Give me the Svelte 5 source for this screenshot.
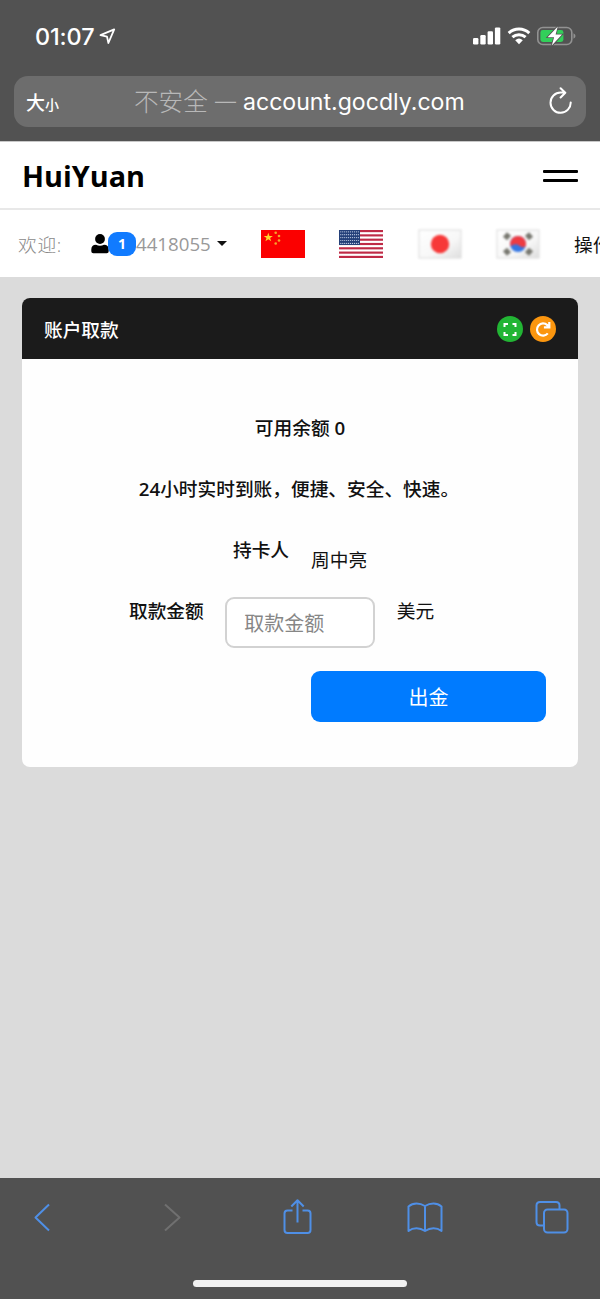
<script>
  let amount = $state('');
  let isFull = $state(false);

  const user = { account: '4418055', unread: 1, name: '周中亮', balance: 0 };

  const stars = Array.from({ length: 50 }, (_, i) => ({
    x: 1.8 + (i % 10) * 1.95,
    y: 1.8 + Math.floor(i / 10) * 2.9,
  }));

  function reset() {
    amount = '';
  }
</script>

<div class="phone">
  <div class="browser-top">
    <div class="status">
      <span class="time">01:07</span>
      <svg class="location" width="17" height="17" viewBox="0 0 17 17">
        <path d="M1.5 7.2 15.2 1.4 9.4 15 8 8.6Z" />
      </svg>
      <svg class="signal" width="28" height="18" viewBox="0 0 28 18">
        <rect x="0" y="11" width="5.4" height="6.5" rx="1.2" />
        <rect x="7.3" y="8" width="5.4" height="9.5" rx="1.2" />
        <rect x="14.6" y="4.2" width="5.4" height="13.3" rx="1.2" />
        <rect x="21.9" y="0.4" width="5.4" height="17.1" rx="1.2" />
      </svg>
      <svg class="wifi" width="24" height="18" viewBox="0 0 24 18">
        <path d="M1.7 6.2a15 15 0 0 1 20.6 0M5.4 10.2a9.8 9.8 0 0 1 13.2 0" />
        <path class="dot" d="M8.2 13.2a5.8 5.8 0 0 1 7.6 0L12 17.3Z" />
      </svg>
      <svg class="battery" width="39" height="22" viewBox="0 0 39 22">
        <rect class="shell" x="0.8" y="2.5" width="34" height="17" rx="5" />
        <path class="tip" d="M36.5 8.2q2 1 2 2.8t-2 2.8z" />
        <rect class="charge" x="3.4" y="5" width="23" height="12" rx="2.4" />
        <path class="bolt" d="M20.8 1.4 10.6 12.3h6.5l-2.3 8.3L25 9.6h-6.4Z" />
      </svg>
    </div>
    <div class="address">
      <span class="size-toggle">大<small>小</small></span>
      <div class="url"><span class="insecure">不安全</span><span class="dash">—</span><span class="domain">account.gocdly.com</span></div>
      <svg width="26" height="30" viewBox="0 0 26 30">
        <path d="M22.7 15.4a10.1 10.1 0 1 1-10-9.8h4M12.6 1.2l4.7 4.6-4.7 4.7" />
      </svg>
    </div>
  </div>

  <header>
    <h1>HuiYuan</h1>
    <button class="menu" aria-label="menu"><i></i><i></i></button>
  </header>

  <nav>
    <span class="welcome">欢迎:</span>
    <svg class="person" width="18" height="20" viewBox="0 0 18 20">
      <circle cx="9" cy="5" r="4.9" />
      <path d="M5 10.8q4 2 8 0Q17.7 11 17.7 15.5v1.7q0 2-2 2H2.3q-2 0-2-2v-1.7Q.3 11 5 10.8Z" />
    </svg>
    <span class="badge">{user.unread}</span>
    <span class="account">{user.account}</span>
    <span class="caret"></span>

    <svg class="flag" width="44" height="28" viewBox="0 0 44 28">
      <rect width="44" height="28" fill="#fb0000" />
      <path fill="#ffd52e" d="m7.3 2.7 1.1 3.3h3.5L9.1 8l1.1 3.3-2.9-2-2.9 2L5.5 8 2.7 6h3.5Z" />
      <g fill="#f5a52a">
        <circle cx="14.7" cy="2.7" r="1.3" />
        <circle cx="18" cy="6" r="1.3" />
        <circle cx="18" cy="10.5" r="1.3" />
        <circle cx="14.7" cy="13.5" r="1.3" />
      </g>
    </svg>
    <svg class="flag" width="44" height="28" viewBox="0 0 44 28">
      <rect width="44" height="28" fill="#fff" />
      {#each [0, 1, 2, 3, 4, 5, 6] as n}
        <rect y={n * 4.308} width="44" height="2.154" fill="#bf2a46" />
      {/each}
      <rect width="21" height="15" fill="#244079" />
      {#each stars as star}
        <circle cx={star.x} cy={star.y} r="0.6" fill="#c5d1e8" />
      {/each}
    </svg>
    <svg class="flag soft" width="44" height="30" viewBox="0 0 44 30">
      <defs>
        <linearGradient id="cloth" x1="0" y1="0" x2="1" y2="1">
          <stop offset="0" stop-color="#fff" />
          <stop offset="0.6" stop-color="#f7f7f7" />
          <stop offset="1" stop-color="#dedede" />
        </linearGradient>
      </defs>
      <rect x="1" y="1" width="42" height="28" fill="url(#cloth)" stroke="#dcdcdc" />
      <circle cx="22" cy="15" r="9.2" fill="#f73838" />
    </svg>
    <svg class="flag soft" width="44" height="30" viewBox="0 0 44 30">
      <rect x="1" y="1" width="42" height="28" fill="url(#cloth)" stroke="#dcdcdc" />
      <circle cx="22" cy="15" r="8" fill="#3476e3" />
      <path fill="#ee3b42" d="M14.400 17.200a8 8 0 1 1 15.400 0q-3.600 2.300-7-1-3.500-2.500-8.400 1Z" />
      <g stroke="#77776f" stroke-width="5.5">
        <path d="m9 9.500 4-4.500M31 5l4 4.500M9 20.500l4 4.500M31 25l4-4.500" />
      </g>
    </svg>
    <span class="action">操作</span>
  </nav>

  <main>
    <section class="card" class:full={isFull}>
      <div class="card-header">
        <h2>账户取款</h2>
        <button class="round green" aria-label="fullscreen" onclick={() => (isFull = !isFull)}>
          <svg width="26" height="26" viewBox="0 0 26 26">
            <path d="M7.5 11V8H11M15.500 8H18.500V11M18.500 16v3h-3M11 19H7.500V16" />
          </svg>
        </button>
        <button class="round orange" aria-label="refresh" onclick={reset}>
          <svg width="26" height="26" viewBox="0 0 26 26">
            <path d="M17.800 17.400a6.100 6.100 0 1 1-.5-8.300l1.500 1.500M19.300 6v5.400h-5.400" />
          </svg>
        </button>
      </div>
      <div class="card-body">
        <p class="balance">可用余额 <b>{user.balance}</b></p>
        <p class="notice"><b>24</b>小时实时到账，便捷、安全、快速。</p>
        <div class="row holder">
          <strong>持卡人</strong>
          <span>{user.name}</span>
        </div>
        <div class="row amount">
          <label for="amount">取款金额</label>
          <input id="amount" placeholder="取款金额" bind:value={amount} />
          <span>美元</span>
        </div>
        <button class="submit">出金</button>
      </div>
    </section>
  </main>

  <footer>
    <div class="tools">
      <svg width="36" height="38" viewBox="0 0 36 38"><path d="M25 6.500 11.500 19.500 25 32.500" /></svg>
      <svg class="disabled" width="36" height="38" viewBox="0 0 36 38"><path d="M13 6.500 27.500 19.500 13 32.500" /></svg>
      <svg width="36" height="38" viewBox="0 0 36 38">
        <path d="M13.500 12.500H8.500Q5.500 12.500 5.500 15.500v16.500q0 3 3 3h20q3 0 3-3V15.500q0-3-3-3h-5M18.500 24.500V2.500M12.300 8.500l6.200-6.200 6.200 6.200" />
      </svg>
      <svg width="36" height="38" viewBox="0 0 36 38">
        <path d="M18 8q-4-2.500-8.500-2.500t-8 3V33q3.500-2.700 8-2.700T18 33q4-2.700 8.500-2.700t8 2.700V8.500q-3.500-3-8-3T18 8v25" />
      </svg>
      <svg width="36" height="38" viewBox="0 0 36 38">
        <path d="M10 27.500H6q-3.500 0-3.500-3.500V7.500Q2.500 4 6 4h16Q25.500 4 25.500 7.500v4" />
        <rect x="10" y="11.500" width="23.500" height="23" rx="3.500" />
      </svg>
    </div>
    <div class="home-bar"></div>
  </footer>
</div>

<style>
  :global(body) {
    margin: 0;
  }
  .phone {
    width: 600px;
    height: 1299px;
    display: flex;
    flex-direction: column;
    overflow: hidden;
    background: #dbdbdb;
    color: #111;
    font-family: "Open Sans", "Noto Sans CJK SC", sans-serif;
    font-size: 18.7px;
  }
  .phone * {
    box-sizing: border-box;
  }
  svg {
    display: block;
    flex: none;
  }
  button {
    padding: 0;
    border: none;
    background: none;
    font-family: inherit;
  }
  h1, h2, p {
    margin: 0;
  }

  .browser-top {
    height: 142px;
    flex: none;
    background: #525252;
    border-bottom: 1px solid #c8c8c8;
    font-family: Inter, "Noto Sans CJK SC", sans-serif;
  }
  .status {
    height: 76px;
    display: flex;
    align-items: center;
    padding: 0 24px 4px 35px;
  }
  .time {
    width: 61px;
    color: #fff;
    font-size: 23.4px;
    font-weight: 500;
    letter-spacing: -0.1px;
  }
  .location {
    margin-left: 3px;
    fill: none;
    stroke: #fff;
    stroke-width: 1.8;
    stroke-linejoin: round;
  }
  .signal {
    margin-left: auto;
    fill: #fff;
  }
  .wifi {
    margin-left: 6px;
    fill: none;
    stroke: #fff;
    stroke-width: 3;
  }
  .wifi .dot {
    fill: #fff;
    stroke: none;
  }
  .battery {
    margin-left: 6px;
  }
  .shell {
    fill: none;
    stroke: #929292;
    stroke-width: 1.6;
  }
  .tip {
    fill: #929292;
  }
  .charge {
    fill: #32cf5a;
  }
  .bolt {
    fill: #fff;
    stroke: #525252;
    stroke-width: 1.6;
    paint-order: stroke;
  }
  .address {
    height: 51px;
    margin: 0 14px;
    padding: 0 12px;
    display: flex;
    align-items: center;
    border-radius: 14px;
    background: #6d6d6d;
    color: #fff;
  }
  .size-toggle {
    width: 108px;
    font-size: 19px;
    font-weight: 500;
    white-space: nowrap;
  }
  .size-toggle small {
    font-size: 14px;
  }
  .url {
    flex: 1;
    display: flex;
    align-items: center;
    line-height: 36px;
    padding-top: 1px;
    white-space: nowrap;
  }
  .insecure, .dash {
    color: #b8b8b8;
    font-weight: 300;
  }
  .insecure {
    width: 81px;
    font-size: 24.6px;
  }
  .dash {
    width: 28px;
    font-size: 21px;
  }
  .domain {
    font-size: 23.1px;
  }
  .address svg {
    fill: none;
    stroke: #fff;
    stroke-width: 2;
    stroke-linecap: round;
    stroke-linejoin: round;
  }

  header {
    height: 68px;
    flex: none;
    display: flex;
    align-items: center;
    justify-content: space-between;
    padding: 1px 22px 0;
    background: #fff;
    border-bottom: 2px solid #e8e8e8;
  }
  h1 {
    padding-top: 1px;
    color: #000;
    font-size: 28.8px;
    line-height: 40px;
    font-weight: 700;
  }
  .menu {
    width: 35px;
    display: grid;
    gap: 6px;
  }
  .menu i {
    height: 3px;
    border-radius: 1px;
    background: #000;
  }

  nav {
    height: 67px;
    flex: none;
    display: flex;
    align-items: center;
    padding-left: 18px;
    background: #fff;
    white-space: nowrap;
  }
  .welcome {
    width: 73px;
    flex: none;
    color: #8a8a8a;
    font-weight: 300;
    letter-spacing: 0.7px;
  }
  .badge {
    width: 28px;
    height: 24px;
    flex: none;
    margin-left: -1px;
    border-radius: 9px;
    background: #117bff;
    color: #fff;
    font-size: 14px;
    font-weight: 700;
    line-height: 24px;
    text-align: center;
  }
  .account {
    width: 76px;
    flex: none;
    color: #999;
  }
  .caret {
    margin-left: 5px;
    border: 5px solid transparent;
    border-top: 5.5px solid #111;
    border-bottom: 0;
  }
  .flag {
    margin-left: 34px;
  }
  .flag.soft {
    margin-left: 34.5px;
    filter: blur(0.9px);
  }
  .action {
    flex: none;
    margin-left: 34px;
  }

  main {
    flex: 1;
    padding: 21px 22px;
  }
  .card {
    height: 469px;
    border-radius: 8px;
    overflow: hidden;
    background: #fefefe;
  }
  .card.full {
    height: 100%;
  }
  .card-header {
    height: 61px;
    display: flex;
    align-items: center;
    gap: 7px;
    padding: 0 22px;
    background: #1b1b1b;
  }
  h2 {
    flex: 1;
    color: #fff;
    font-size: 18.7px;
    font-weight: 500;
  }
  .round {
    width: 26px;
    height: 26px;
    border-radius: 50%;
  }
  .round svg {
    fill: none;
    stroke: #fff;
    stroke-width: 2;
  }
  .green {
    background: #22b534;
  }
  .orange {
    background: #fb960f;
  }
  .orange svg {
    stroke-width: 2.2;
  }
  .card-body {
    display: flex;
    flex-direction: column;
    padding: 55px 32px 0;
    line-height: 28px;
  }
  .balance, .notice {
    font-weight: 500;
    text-align: center;
  }
  .balance b, .notice b {
    font-weight: 600;
  }
  .notice {
    margin-top: 33px;
    padding-right: 2px;
  }
  .row {
    display: flex;
    align-items: flex-start;
  }
  .row strong, .row label {
    font-weight: 500;
  }
  .holder {
    gap: 22px;
    margin: 33px 0 0 179px;
  }
  .holder span {
    padding-top: 10px;
  }
  .amount {
    gap: 21.5px;
    margin: 23px 0 0 75px;
  }
  input {
    width: 150px;
    height: 51px;
    padding: 2px 17px 0;
    border: 2px solid #d2d2d2;
    border-radius: 9px;
    background: #fff;
    font-family: inherit;
    font-size: 20px;
  }
  input::placeholder {
    color: #868686;
  }
  .submit {
    width: 235px;
    height: 51px;
    align-self: flex-end;
    margin-top: 23px;
    border-radius: 9px;
    background: #007bff;
    color: #fff;
    font-size: 20px;
  }

  footer {
    height: 121px;
    flex: none;
    display: flex;
    flex-direction: column;
    align-items: center;
    background: #515151;
  }
  .tools {
    width: 100%;
    height: 102px;
    display: flex;
    align-items: center;
    justify-content: space-between;
    padding: 0 30px 24px 24px;
  }
  .tools svg {
    fill: none;
    stroke: #4f8fe6;
    stroke-width: 2;
    stroke-linejoin: round;
  }
  .tools .disabled {
    stroke: #707070;
  }
  .home-bar {
    width: 214px;
    height: 7px;
    border-radius: 4px;
    background: #f1f1f1;
  }
</style>
